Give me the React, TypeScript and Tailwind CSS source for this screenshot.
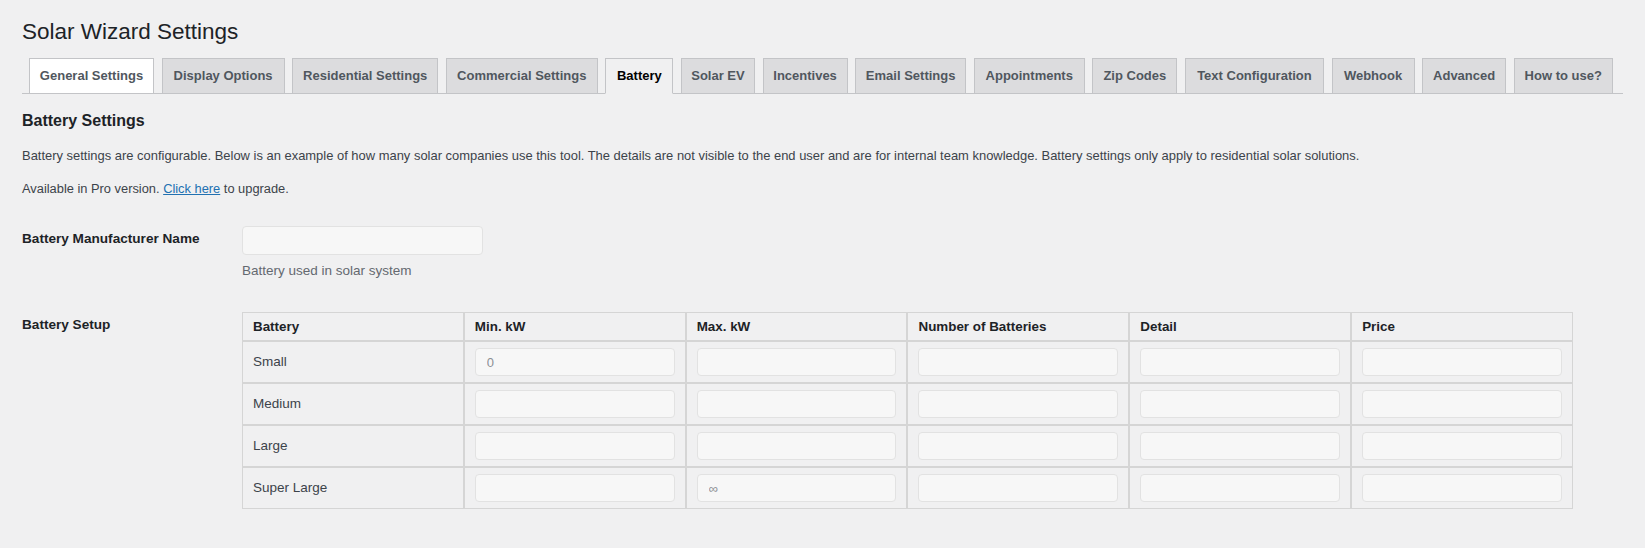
import React from "react";

const tabs = [
  { label: "General Settings", w: "w-[125px]", kind: "white" },
  { label: "Display Options", w: "w-[123px]", kind: "idle" },
  { label: "Residential Settings", w: "w-[146px]", kind: "idle" },
  { label: "Commercial Settings", w: "w-[152px]", kind: "idle" },
  { label: "Battery", w: "w-[68px]", kind: "active" },
  { label: "Solar EV", w: "w-[74px]", kind: "idle" },
  { label: "Incentives", w: "w-[85px]", kind: "idle" },
  { label: "Email Settings", w: "w-[111px]", kind: "idle" },
  { label: "Appointments", w: "w-[111px]", kind: "idle" },
  { label: "Zip Codes", w: "w-[85px]", kind: "idle" },
  { label: "Text Configuration", w: "w-[139px]", kind: "idle" },
  { label: "Webhook", w: "w-[83px]", kind: "idle" },
  { label: "Advanced", w: "w-[84px]", kind: "idle" },
  { label: "How to use?", w: "w-[99px]", kind: "idle" },
];

const columns = ["Battery", "Min. kW", "Max. kW", "Number of Batteries", "Detail", "Price"];

const rows = [
  { name: "Small", min: "0", max: "" },
  { name: "Medium", min: "", max: "" },
  { name: "Large", min: "", max: "" },
  { name: "Super Large", min: "", max: "∞" },
];

const tabStyle: Record<string, string> = {
  white: "bg-white border-[#c3c4c7] text-[#50575e]",
  idle: "bg-[#dcdcde] border-[#c3c4c7] text-[#50575e]",
  active: "bg-[#f0f0f1] border-[#c3c4c7] border-b-[#f0f0f1] text-black",
};

function CellInput({ placeholder }: { placeholder?: string }) {
  return (
    <input
      type="text"
      placeholder={placeholder}
      className="block h-[28px] w-full rounded-[4px] border border-[#e2e2e2] bg-[#f7f7f7] px-[11px] text-[13px] text-[#2c3338] outline-none placeholder:text-[#8c8f94]"
    />
  );
}

export default function App() {
  return (
    <div className="min-h-screen bg-[#f0f0f1] pl-[22px] pr-[22px] font-['Liberation_Sans',Arial,sans-serif] text-[#3c434a]">
      <h1 className="pt-[17px] text-[22.5px] leading-[29px] font-normal text-[#1d2327]">
        Solar Wizard Settings
      </h1>

      <nav className="mt-[12px] flex h-[36px] gap-[7.6px] border-b border-[#c3c4c7] pl-[7px]">
        {tabs.map((t) => (
          <a
            key={t.label}
            className={`-mb-px flex h-[36px] shrink-0 items-center justify-center border text-[13px] font-bold ${t.w} ${tabStyle[t.kind]}`}
          >
            {t.label}
          </a>
        ))}
      </nav>

      <h2 className="mt-[17px] text-[16px] leading-[20px] font-bold text-[#1d2327]">Battery Settings</h2>
      <p className="mt-[15px] text-[12.95px] leading-[20px]">
        Battery settings are configurable. Below is an example of how many solar companies use this tool. The
        details are not visible to the end user and are for internal team knowledge. Battery settings only apply
        to residential solar solutions.
      </p>
      <p className="mt-[13px] text-[12.85px] leading-[20px]">
        Available in Pro version.{" "}
        <a className="text-[#2271b1] underline">Click here</a> to upgrade.
      </p>

      <div className="mt-[27px] flex">
        <div className="w-[220px] shrink-0 pt-[3px] text-[13.6px] leading-[20px] font-bold text-[#1d2327]">
          Battery Manufacturer Name
        </div>
        <div>
          <input
            type="text"
            className="block h-[29px] w-[241px] rounded-[4px] border border-[#e2e2e2] bg-[#f7f7f7] px-2 outline-none"
          />
          <p className="mt-[6px] text-[13.5px] leading-[20px] text-[#646970]">Battery used in solar system</p>
        </div>
      </div>

      <div className="mt-[31px] flex">
        <div className="w-[220px] shrink-0 pt-[3px] text-[13.6px] leading-[20px] font-bold text-[#1d2327]">
          Battery Setup
        </div>
        <table className="w-[1331px] table-fixed border-separate border-spacing-0">
          <thead>
            <tr>
              {columns.map((c) => (
                <th
                  key={c}
                  className="border border-[#d5d5d5] px-[10px] py-[4px] text-left text-[13.4px] leading-[19px] font-bold text-[#1d2327]"
                >
                  {c}
                </th>
              ))}
            </tr>
          </thead>
          <tbody>
            {rows.map((r) => (
              <tr key={r.name}>
                <td className="border border-[#d5d5d5] px-[10px] py-[6px] text-[13.5px] leading-[28px] text-[#3c434a]">
                  {r.name}
                </td>
                <td className="border border-[#d5d5d5] px-[10px] py-[6px]">
                  <CellInput placeholder={r.min} />
                </td>
                <td className="border border-[#d5d5d5] px-[10px] py-[6px]">
                  <CellInput placeholder={r.max} />
                </td>
                <td className="border border-[#d5d5d5] px-[10px] py-[6px]">
                  <CellInput />
                </td>
                <td className="border border-[#d5d5d5] px-[10px] py-[6px]">
                  <CellInput />
                </td>
                <td className="border border-[#d5d5d5] px-[10px] py-[6px]">
                  <CellInput />
                </td>
              </tr>
            ))}
          </tbody>
        </table>
      </div>
    </div>
  );
}
